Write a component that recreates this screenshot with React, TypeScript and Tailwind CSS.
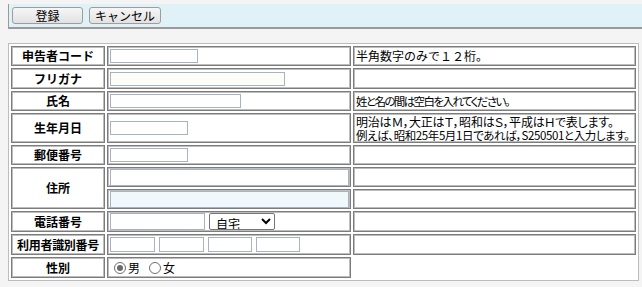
import React from 'react'

const jp = "[font-family:'Noto_Sans_CJK_JP',sans-serif]"

const labelCell =
  'border border-[#7c7c7c] shadow-[inset_0_0_0_1px_#bdbdbd] bg-white text-center align-middle text-[12px] font-bold leading-[14px] text-black px-[1px]'
const inputCell =
  'border border-[#7c7c7c] shadow-[inset_0_0_0_1px_#bdbdbd] bg-white align-middle px-[2px]'
const noteCell =
  'border border-[#7c7c7c] shadow-[inset_0_0_0_1px_#bdbdbd] bg-white align-middle text-[12px] leading-[12px] text-black px-[2px] whitespace-nowrap overflow-hidden'

function TextBox({ w, h = 14, tint }: { w: number; h?: number; tint?: string }) {
  return (
    <input
      type="text"
      className={`block border border-[#a8b3c2] ${tint ?? 'bg-white'} outline-none`}
      style={{ width: w, height: h }}
    />
  )
}

function Radio({ checked, label }: { checked?: boolean; label: string }) {
  return (
    <span className="flex items-center gap-[2px]">
      <span className="flex size-[12px] items-center justify-center rounded-full border border-[#6e6e6e] bg-white">
        {checked && <span className="size-[6px] rounded-full bg-[#6a6a6a]" />}
      </span>
      <span className="text-[12px] leading-[13px]">{label}</span>
    </span>
  )
}

export default function App() {
  return (
    <div className={`min-h-[287px] w-[642px] bg-[#f4f4f4] pt-[4px] ${jp}`}>
      {/* toolbar */}
      <div className="ml-[8px] flex h-[25px] items-center gap-[6px] border-b-2 border-l border-[#9a9a9a] bg-[#e0f2f8] pl-[3px]">
        <button className="h-[17px] w-[71px] rounded-[3px] border border-[#9d9d9d] bg-gradient-to-b from-[#f6f6f6] to-[#e2e2e2] text-[12px] leading-[15px] text-black">
          登録
        </button>
        <button className="h-[17px] w-[72px] rounded-[3px] border border-[#9d9d9d] bg-gradient-to-b from-[#f6f6f6] to-[#e2e2e2] text-[12px] leading-[15px] text-black">
          キャンセル
        </button>
      </div>

      <table className="ml-[8px] mt-[14px] w-[631px] table-fixed border-separate border-spacing-[2px] border border-[#bcbcbc] bg-white">
        <colgroup>
          <col className="w-[94px]" />
          <col className="w-[244px]" />
          <col />
        </colgroup>
        <tbody>
          <tr className="h-[20px]">
            <td className={labelCell}>申告者コード</td>
            <td className={inputCell}>
              <TextBox w={88} />
            </td>
            <td className={noteCell}>半角数字のみで１２桁。</td>
          </tr>
          <tr className="h-[21px]">
            <td className={labelCell}>フリガナ</td>
            <td className={inputCell}>
              <TextBox w={175} tint="bg-[#fdfdf7]" />
            </td>
            <td className={noteCell}></td>
          </tr>
          <tr className="h-[20px]">
            <td className={labelCell}>氏名</td>
            <td className={inputCell}>
              <TextBox w={131} />
            </td>
            <td className={noteCell}>
              <span className="text-[11.5px] tracking-[-1.6px] [font-feature-settings:'palt']">
                姓と名の間は空白を入れてください。
              </span>
            </td>
          </tr>
          <tr className="h-[30px]">
            <td className={labelCell}>生年月日</td>
            <td className={inputCell}>
              <TextBox w={78} />
            </td>
            <td className={noteCell}>
              <span className="block leading-[12px] tracking-[-0.2px] [font-feature-settings:'palt']">
                明治はＭ，大正はＴ，昭和はＳ，平成はＨで表します。
              </span>
              <span className="mt-[1px] block text-[11.5px] leading-[12px] tracking-[-0.4px] [font-feature-settings:'palt']">
                例えば、昭和25年5月1日であれば，S250501と入力します。
              </span>
            </td>
          </tr>
          <tr className="h-[20px]">
            <td className={labelCell}>郵便番号</td>
            <td className={inputCell}>
              <TextBox w={78} />
            </td>
            <td className={noteCell}></td>
          </tr>
          <tr className="h-[20px]">
            <td className={labelCell} rowSpan={2}>
              住所
            </td>
            <td className={inputCell}>
              <TextBox w={239} h={17} />
            </td>
            <td className={noteCell}></td>
          </tr>
          <tr className="h-[20px]">
            <td className={inputCell}>
              <TextBox w={239} h={17} tint="bg-[#f1f8fc]" />
            </td>
            <td className={noteCell}></td>
          </tr>
          <tr className="h-[21px]">
            <td className={labelCell}>電話番号</td>
            <td className={inputCell}>
              <div className="flex items-center gap-[4px]">
                <TextBox w={95} h={17} />
                <select className="h-[17px] w-[66px] rounded-[2px] border border-[#767676] bg-white pl-[2px] text-[12px] leading-[14px] text-black">
                  <option>自宅</option>
                  <option>携帯</option>
                  <option>勤務先</option>
                </select>
              </div>
            </td>
            <td className={noteCell}></td>
          </tr>
          <tr className="h-[21px]">
            <td className={`${labelCell} tracking-[-0.3px]`}>利用者識別番号</td>
            <td className={inputCell}>
              <div className="flex gap-[4px]">
                <TextBox w={45} h={15} />
                <TextBox w={45} h={15} />
                <TextBox w={44} h={15} />
                <TextBox w={44} h={15} />
              </div>
            </td>
            <td className={noteCell}></td>
          </tr>
          <tr className="h-[21px]">
            <td className={labelCell}>性別</td>
            <td className={inputCell}>
              <div className="flex items-center gap-[9px] pl-[4px]">
                <Radio checked label="男" />
                <Radio label="女" />
              </div>
            </td>
            <td></td>
          </tr>
        </tbody>
      </table>
    </div>
  )
}
